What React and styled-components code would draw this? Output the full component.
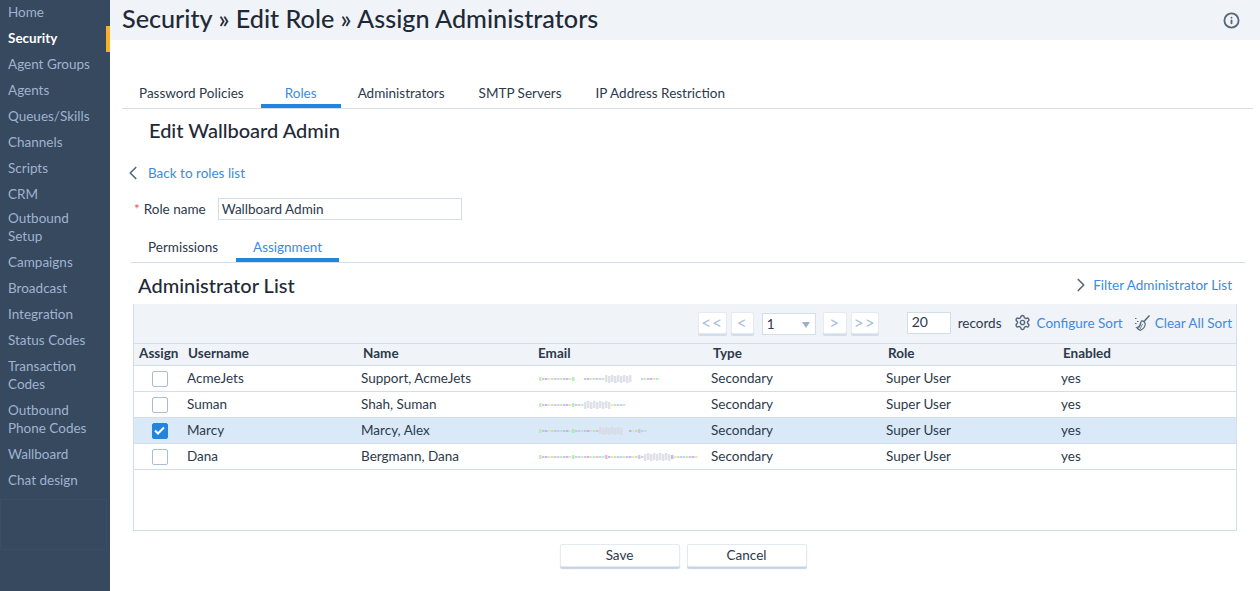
import styled, { createGlobalStyle } from "styled-components";
import { Info, Settings, ChevronLeft, ChevronRight } from "lucide-react";

const GlobalStyle = createGlobalStyle`
  html, body {
    margin: 0;
    padding: 0;
    height: 591px;
    overflow: hidden;
    background: #fff;
    font-family: "Lato", "Open Sans", sans-serif;
    font-size: 13.5px;
    color: #2c3a4b;
  }
  * { box-sizing: border-box; }
`;

const Page = styled.div`
  display: flex;
  width: 1260px;
  height: 591px;
  overflow: hidden;
`;

const Sidebar = styled.nav`
  width: 110px;
  flex: none;
  background: #36495f;
  display: flex;
  flex-direction: column;
`;

const NavItem = styled.div`
  padding: 3px 8px 5px;
  margin-top: ${(p) => (p.$tight ? "-2px" : "0")};
  line-height: 18px;
  color: ${(p) => (p.$active ? "#fff" : "#9fb3cf")};
  font-weight: ${(p) => (p.$active ? 700 : 400)};
  border-right: 4px solid ${(p) => (p.$active ? "#fbb023" : "transparent")};
`;

const NavSlot = styled.div`
  width: 107px;
  height: 51px;
  margin-top: 5px;
  border: 1px solid #3a4e65;
`;

const Main = styled.main`
  flex: 1;
  min-width: 0;
  display: flex;
  flex-direction: column;
`;

const Header = styled.header`
  height: 40px;
  flex: none;
  background: #f0f3f8;
  display: flex;
  align-items: center;
  justify-content: space-between;
  padding: 0 20px 0 12px;
`;

const Title = styled.h1`
  margin: 0 0 5px;
  font-size: 25.2px;
  font-weight: 500;
  color: #1f2a37;
`;

const InfoButton = styled.span`
  display: flex;
  color: #56687c;
`;

const Tabs = styled.div`
  display: flex;
  border-bottom: 1px solid #d3deeb;
  margin: ${(p) => p.$margin};
  height: ${(p) => p.$height}px;
`;

const Tab = styled.div`
  min-width: ${(p) => p.$min || 80}px;
  height: ${(p) => p.$top + 24}px;
  padding: ${(p) => p.$top}px 17px 2px;
  text-align: ${(p) => (p.$left ? "left" : "center")};
  line-height: 18px;
  color: ${(p) => (p.$active ? "#3d8be0" : "#2c3a4b")};
  border-bottom: 4px solid ${(p) => (p.$active ? "#2185e0" : "transparent")};
`;

const Section = styled.h2`
  margin: 0;
  font-size: 20px;
  font-weight: 500;
  color: #1f2a37;
  line-height: 24px;
`;

const EditTitle = styled(Section)`
  margin: 9px 0 0 39px;
`;

const BackRow = styled.div`
  display: flex;
  align-items: center;
  gap: 4px;
  margin: 21px 0 0 12px;
  height: 20px;
  color: #56687c;
`;

const LinkText = styled.a`
  color: #3d8be0;
`;

const RoleRow = styled.div`
  display: flex;
  align-items: center;
  margin: 15px 0 0 24px;
  height: 22px;
`;

const Required = styled.span`
  color: #e2574c;
  margin-right: 4px;
`;

const RoleInput = styled.div`
  width: 244px;
  height: 22px;
  margin-left: 12px;
  border: 1px solid #d3deeb;
  padding: 0 3px;
  line-height: 20px;
`;

const ListHead = styled.div`
  display: flex;
  align-items: center;
  justify-content: space-between;
  height: 41px;
  margin-left: 28px;
  padding: 3px 28px 0 0;
`;

const FilterLink = styled.div`
  display: flex;
  align-items: center;
  gap: 1px;
  color: #56687c;
`;

const Grid = styled.div`
  margin-left: 23px;
  width: 1104px;
  height: 227px;
  border: 1px solid #d3deeb;
  border-top: 0;
`;

const Toolbar = styled.div`
  height: 39px;
  background: #f0f3f8;
  display: flex;
  align-items: center;
  justify-content: flex-end;
  padding: 0 4px 2px 0;
`;

const PageButton = styled.div`
  width: ${(p) => p.$w}px;
  height: 22px;
  margin: 1px 0 0 ${(p) => p.$ml || 4}px;
  background: #fff;
  border: 1px solid #e4eaf2;
  border-radius: 2px;
  box-shadow: 0 2px 0 #d3deeb;
  color: #a9bdd6;
  text-align: center;
  line-height: 19px;
  font-size: 17px;
  letter-spacing: 1px;
`;

const PageSelect = styled.div`
  width: 54px;
  height: 22px;
  margin: 3px 0 0 8px;
  background: #fff;
  border: 1px solid #d3deeb;
  display: flex;
  align-items: center;
  justify-content: space-between;
  padding: 0 5px 0 4px;
  &::after {
    content: "";
    border-left: 4px solid transparent;
    border-right: 4px solid transparent;
    border-top: 6px solid #9fb0c6;
    margin-top: 2px;
  }
`;

const RecordsInput = styled.div`
  width: 44px;
  height: 22px;
  margin: 1px 0 0 28px;
  background: #fff;
  border: 1px solid #d3deeb;
  padding-left: 4px;
  line-height: 18px;
  font-size: 14px;
`;

const RecordsLabel = styled.span`
  margin-left: 7px;
`;

const ToolLink = styled.div`
  display: flex;
  align-items: center;
  gap: ${(p) => p.$gap}px;
  margin-left: ${(p) => p.$ml}px;
  color: #56687c;
`;

const Row = styled.div`
  display: grid;
  grid-template-columns: 50px repeat(5, 175px) 1fr;
  align-items: center;
  height: ${(p) => (p.$head ? 22 : 26)}px;
  border-top: 1px solid #d3deeb;
  background: ${(p) => (p.$head ? "#f0f3f8" : p.$selected ? "#d9e9f8" : "#fff")};
  font-weight: ${(p) => (p.$head ? 700 : 400)};
  &:last-of-type {
    border-bottom: 1px solid #d3deeb;
    height: 27px;
  }
`;

const HeadCell = styled.div`
  padding-left: ${(p) => p.$pl ?? 4}px;
  margin-bottom: 3px;
`;

const Cell = styled.div`
  padding-left: ${(p) => p.$pl ?? 2}px;
  margin-bottom: 2px;
`;

const EmailCell = styled.div`
  display: flex;
  padding-left: 5px;
  svg {
    filter: blur(0.6px);
    opacity: 0.75;
  }
`;

const CheckWrap = styled.div`
  display: flex;
  justify-content: center;
  padding-left: 1px;
`;

const Check = styled.div`
  width: 16px;
  height: 16px;
  border-radius: 2px;
  border: 1px solid ${(p) => (p.$on ? "#2185e0" : "#a9bdd6")};
  background: ${(p) => (p.$on ? "#2185e0" : "#fff")};
  display: flex;
  align-items: center;
  justify-content: center;
`;

const Actions = styled.div`
  display: flex;
  justify-content: center;
  gap: 7px;
  margin: 13px 0 0 -4px;
`;

const ActionButton = styled.div`
  width: 120px;
  height: 23px;
  background: #fff;
  border: 1px solid #e4eaf2;
  border-radius: 2px;
  box-shadow: 0 2px 1px #c6d3e6;
  text-align: center;
  line-height: 21px;
`;

const navItems = [
  "Home", "Security", "Agent Groups", "Agents", "Queues/Skills", "Channels", "Scripts", "CRM",
  "Outbound Setup", "Campaigns", "Broadcast", "Integration", "Status Codes", "Transaction Codes",
  "Outbound Phone Codes", "Wallboard", "Chat design",
];

// email column is smeared in the screenshot: [left stretch end, gap end, cluster start, tail start, tail end]
const rows = [
  { user: "AcmeJets", name: "Support, AcmeJets", smear: [36, 44, 66, 101, 119] },
  { user: "Suman", name: "Shah, Suman", smear: [30, 30, 45, 72, 87] },
  { user: "Marcy", name: "Marcy, Alex", smear: [50, 50, 58, 88, 107], selected: true },
  { user: "Dana", name: "Bergmann, Dana", smear: [80, 80, 104, 132, 159] },
];

const tints = ["#a8f09a", "#e89cf0", "#a8a8fa", "#f0e080", "#8cf0b0", "#f4a8cc", "#a0d0fa"];

function Smear({ parts: [leftEnd, gapEnd, clusterStart, tailStart, tailEnd] }) {
  const dots = [];
  for (let x = 0; x < tailEnd; x += 3) {
    if (x >= leftEnd && x < gapEnd) continue;
    if (x >= clusterStart + 26 && x < tailStart) continue;
    const inCluster = x >= clusterStart && x < clusterStart + 26;
    const tall = !inCluster && (x * 13) % 11 === 0;
    dots.push(
      <rect
        key={x}
        x={x}
        y={inCluster ? 1 + (x % 2) : tall ? 3 : 4}
        width="2.500"
        height={inCluster ? 7 : tall ? 4 : 2}
        fill={inCluster ? "#d8d8e2" : tints[(x * 5) % 7]}
      />
    );
  }
  return (
    <svg width="165" height="10">
      {dots}
    </svg>
  );
}

function Broom() {
  return (
    <svg width="16" height="16" viewBox="0 0 16 16" fill="none" stroke="#56687c" strokeWidth="1.200">
      <path d="M15.500 .5 10 6.500" strokeWidth="1.500" />
      <path d="M7.500 6c1.500-.5 4 1.500 3.700 3.500-.4 2.500-2.500 4.800-4.700 5.800-1.500-.4-3-1.300-4-2.800 1.800 0 3-.8 3.500-2.200C6.300 9 6.500 7 7.500 6Z" />
      <path d="M8.500 9 6 14M7 8.500 4.500 13.500" strokeWidth=".8" />
      <path d="M1 3.500h1.500M3 6.500h1.500M1 8.500h1.500" strokeWidth="1" />
    </svg>
  );
}

export default function App() {
  return (
    <Page>
      <GlobalStyle />
      <Sidebar>
        {navItems.map((item) => (
          <NavItem key={item} $active={item === "Security"} $tight={item === "Outbound Setup"}>
            {item}
          </NavItem>
        ))}
        <NavSlot />
      </Sidebar>
      <Main>
        <Header>
          <Title>Security » Edit Role » Assign Administrators</Title>
          <InfoButton>
            <Info size={17} strokeWidth={2.600} />
          </InfoButton>
        </Header>
        <Tabs $margin="39px 7px 0 12px" $height={30}>
          <Tab $top={5}>Password Policies</Tab>
          <Tab $top={5} $active>Roles</Tab>
          <Tab $top={5}>Administrators</Tab>
          <Tab $top={5}>SMTP Servers</Tab>
          <Tab $top={5}>IP Address Restriction</Tab>
        </Tabs>
        <EditTitle>Edit Wallboard Admin</EditTitle>
        <BackRow>
          <ChevronLeft size={22} strokeWidth={1.800} />
          <LinkText>Back to roles list</LinkText>
        </BackRow>
        <RoleRow>
          <Required>*</Required>
          Role name
          <RoleInput>Wallboard Admin</RoleInput>
        </RoleRow>
        <Tabs $margin="15px 15px 0 21px" $height={28}>
          <Tab $top={3} $min={105} $left>Permissions</Tab>
          <Tab $top={3} $active $min={102}>Assignment</Tab>
        </Tabs>
        <ListHead>
          <Section>Administrator List</Section>
          <FilterLink>
            <ChevronRight size={22} strokeWidth={1.800} />
            <LinkText>Filter Administrator List</LinkText>
          </FilterLink>
        </ListHead>
        <Grid>
          <Toolbar>
            <PageButton $w={29}>&lt;&lt;</PageButton>
            <PageButton $w={23}>&lt;</PageButton>
            <PageSelect>1</PageSelect>
            <PageButton $w={24} $ml={7}>&gt;</PageButton>
            <PageButton $w={28}>&gt;&gt;</PageButton>
            <RecordsInput>20</RecordsInput>
            <RecordsLabel>records</RecordsLabel>
            <ToolLink $ml={12} $gap={6}>
              <Settings size={17} strokeWidth={2} />
              <LinkText>Configure Sort</LinkText>
            </ToolLink>
            <ToolLink $ml={11} $gap={5}>
              <Broom />
              <LinkText>Clear All Sort</LinkText>
            </ToolLink>
          </Toolbar>
          <Row $head>
            <HeadCell $pl={5}>Assign</HeadCell>
            <HeadCell>Username</HeadCell>
            <HeadCell>Name</HeadCell>
            <HeadCell>Email</HeadCell>
            <HeadCell>Type</HeadCell>
            <HeadCell>Role</HeadCell>
            <HeadCell>Enabled</HeadCell>
          </Row>
          {rows.map((r) => (
            <Row key={r.user} $selected={r.selected}>
              <CheckWrap>
                <Check $on={r.selected}>
                  {r.selected && (
                    <svg width="11" height="9" viewBox="0 0 11 9" fill="none" stroke="#fff" strokeWidth="2">
                      <path d="M1 4.500 4 7.500 10 1.500" />
                    </svg>
                  )}
                </Check>
              </CheckWrap>
              <Cell $pl={3}>{r.user}</Cell>
              <Cell>{r.name}</Cell>
              <EmailCell><Smear parts={r.smear} /></EmailCell>
              <Cell>Secondary</Cell>
              <Cell>Super User</Cell>
              <Cell>yes</Cell>
            </Row>
          ))}
        </Grid>
        <Actions>
          <ActionButton>Save</ActionButton>
          <ActionButton>Cancel</ActionButton>
        </Actions>
      </Main>
    </Page>
  );
}
